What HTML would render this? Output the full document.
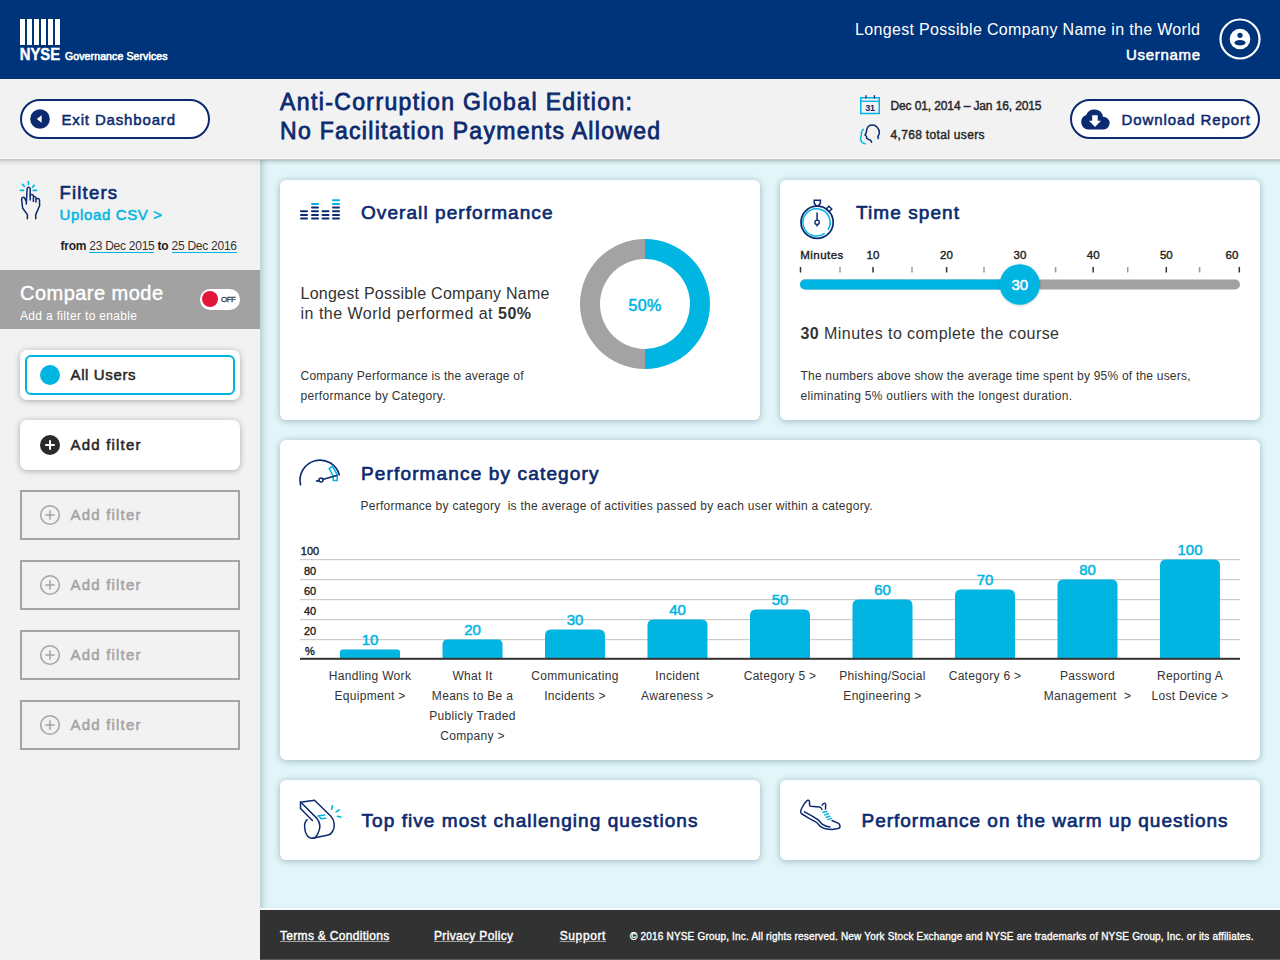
<!DOCTYPE html>
<html><head><meta charset="utf-8">
<style>
*{margin:0;padding:0;box-sizing:border-box}
html,body{width:1280px;height:960px;overflow:hidden;background:#f2f2f2;font-family:"Liberation Sans",sans-serif}
.a{position:absolute}
.t{position:absolute;white-space:nowrap;line-height:1}
.card{position:absolute;background:#fff;border-radius:6px;box-shadow:0 1px 7px rgba(0,50,70,.32)}
svg text{font-family:"Liberation Sans",sans-serif}
</style></head><body>
<div class="a" style="left:0;top:0;width:1280px;height:79px;background:#00347a"></div>
<div class="a" style="left:20px;top:19px;width:5px;height:26px;background:#fff"></div>
<div class="a" style="left:27px;top:19px;width:5px;height:26px;background:#fff"></div>
<div class="a" style="left:34px;top:19px;width:5px;height:26px;background:#fff"></div>
<div class="a" style="left:41px;top:19px;width:5px;height:26px;background:#fff"></div>
<div class="a" style="left:48px;top:19px;width:5px;height:26px;background:#fff"></div>
<div class="a" style="left:55px;top:19px;width:5px;height:26px;background:#fff"></div>
<svg class="a" style="left:0;top:40px" width="80" height="24"><text x="19.8" y="19.6" font-size="16.3" font-weight="bold" fill="#fff" stroke="#fff" stroke-width="0.45" textLength="40.3" lengthAdjust="spacingAndGlyphs">NYSE</text></svg>
<div class="t" style="top:51.11px;font-size:10.5px;color:#fff;-webkit-text-stroke:0.36px #fff;letter-spacing:0.118px;left:65px;-webkit-text-stroke:0.6px #fff;">Governance Services</div>
<div class="t" style="top:21.96px;font-size:16px;color:#fff;letter-spacing:0.331px;left:855px;">Longest Possible Company Name in the World</div>
<div class="t" style="top:47.30px;font-size:15px;color:#fff;-webkit-text-stroke:0.51px #fff;letter-spacing:0.687px;left:1126px;">Username</div>
<svg class="a" style="left:1218px;top:17px" width="44" height="44" viewBox="0 0 44 44">
<circle cx="22" cy="22" r="19.5" fill="none" stroke="#fff" stroke-width="2.2"/>
<circle cx="22" cy="22" r="10.3" fill="#fff"/>
<circle cx="22" cy="18.3" r="2.6" fill="#00347a"/>
<ellipse cx="22" cy="25.8" rx="5.6" ry="2.8" fill="#00347a"/>
</svg>
<div class="a" style="left:0;top:79px;width:1280px;height:80px;background:#f2f2f2"></div>
<div class="a" style="left:20px;top:99.4px;width:190px;height:40px;border:2px solid #0b2a6f;border-radius:20px;background:#fff"></div>
<svg class="a" style="left:30px;top:109px" width="20" height="20" viewBox="0 0 20 20">
<circle cx="10" cy="10" r="9.8" fill="#0b2a6f"/><path d="M6.8 10 L11.6 6.2 L11.6 13.8 Z" fill="#fff"/></svg>
<div class="t" style="top:112.30px;font-size:15px;color:#0b2a6f;-webkit-text-stroke:0.51px #0b2a6f;letter-spacing:0.842px;left:61.5px;">Exit Dashboard</div>
<div class="t" style="top:90.53px;font-size:23px;color:#0b2a6f;-webkit-text-stroke:0.78px #0b2a6f;letter-spacing:1.378px;left:280px;">Anti-Corruption Global Edition:</div>
<div class="t" style="top:120.03px;font-size:23px;color:#0b2a6f;-webkit-text-stroke:0.78px #0b2a6f;letter-spacing:1.289px;left:280px;">No Facilitation Payments Allowed</div>
<svg class="a" style="left:858px;top:93px" width="24" height="24" viewBox="0 0 24 24">
<rect x="2.75" y="4.75" width="18.5" height="15.75" fill="none" stroke="#00b5e2" stroke-width="1.5"/>
<line x1="2.75" y1="8.3" x2="21.25" y2="8.3" stroke="#00b5e2" stroke-width="1.3"/>
<line x1="8" y1="2.2" x2="8" y2="5.6" stroke="#0b2a6f" stroke-width="1.3"/>
<line x1="16.4" y1="2.2" x2="16.4" y2="5.6" stroke="#0b2a6f" stroke-width="1.3"/>
<text x="12" y="17.5" font-family="Liberation Sans" font-weight="bold" font-size="9" fill="#0b2a6f" text-anchor="middle" letter-spacing="-0.3">31</text>
</svg>
<div class="t" style="top:99.84px;font-size:12px;color:#262626;-webkit-text-stroke:0.41px #262626;letter-spacing:-0.120px;left:890.5px;">Dec 01, 2014 – Jan 16, 2015</div>
<svg class="a" style="left:858px;top:123px" width="24" height="24" viewBox="0 0 24 24">
<path d="M13.6 19.2 L12.6 17.3 L10.4 16.4 L8.7 15.1 L8.4 13.25 L7 12 L8.1 10.1 L8.6 7.3 C8.9 5.5 9.5 4.2 10.5 3.3 C11.5 2.4 13 2 14.5 2 C16.5 2 18 2.8 19.2 4.2 C20.6 5.8 21.7 7.9 21.4 10 C21.2 11.5 20.75 12 20.2 13 L19.8 13.6 L20.4 15.4" fill="none" stroke="#0b2a6f" stroke-width="1.5" stroke-linejoin="round" stroke-linecap="round"/>
<path d="M5.4 6.4 C4.5 7.2 3.8 8 3.6 8.9 C3.2 10 3.4 11.5 3.25 12.6 C3.1 13.8 2.6 14.6 2.6 15.75 C2.6 17 3.3 18.6 4.2 19.5 C5 20.2 6 20.5 7 20.75" fill="none" stroke="#00b5e2" stroke-width="1.5" stroke-linecap="round"/>
</svg>
<div class="t" style="top:129.34px;font-size:12px;color:#262626;-webkit-text-stroke:0.41px #262626;letter-spacing:0.330px;left:890.5px;">4,768 total users</div>
<div class="a" style="left:1070px;top:99.4px;width:190px;height:40px;border:2px solid #0b2a6f;border-radius:20px;background:#fff"></div>
<svg class="a" style="left:1078px;top:106px" width="36" height="26" viewBox="0 0 36 26">
<path d="M9.7 23.5 A7.5 7.5 0 0 1 8.2 9 A8.8 8.8 0 0 1 25 10.7 A6.4 6.4 0 0 1 25.5 23.5 Z" fill="#0b2a6f"/>
<path d="M14.2 9.3 H19.7 V14.8 H23 L17 21 L11 14.8 H14.2 Z" fill="#fff"/>
</svg>
<div class="t" style="top:112.30px;font-size:15px;color:#0b2a6f;-webkit-text-stroke:0.51px #0b2a6f;letter-spacing:0.900px;left:1121.5px;">Download Report</div>
<div class="a" style="left:0;top:158px;width:1280px;height:1px;background:#f8f8f8"></div>
<div class="a" style="left:0;top:160px;width:260px;height:800px;background:#f2f2f2"></div>
<svg class="a" style="left:12px;top:175px" width="32" height="48" viewBox="0 0 32 48">
<path d="M15.4 43.8 V39.6 L10.7 33.3 L9.6 24.5 C9.4 22.2 11.8 21.6 12.8 23.4 L14 26" fill="none" stroke="#0b2a6f" stroke-width="1.5" stroke-linecap="round" stroke-linejoin="round"/>
<path d="M14.3 29 L15.1 14 C15.2 11.6 18.1 11.6 18.2 14 L18.2 25" fill="none" stroke="#0b2a6f" stroke-width="1.5" stroke-linecap="round" stroke-linejoin="round"/>
<path d="M18.2 20.5 C18.6 18.9 21.3 19 21.4 21 V26.6 M21.4 22.3 C22 21.2 23.8 21.4 24 23 V27 M24.2 24.2 C25.2 22.9 27.3 23.5 27.5 25 L27.6 30.7 L23.7 39.6 V43.8" fill="none" stroke="#0b2a6f" stroke-width="1.5" stroke-linecap="round" stroke-linejoin="round"/>
<path d="M16.4 6.6 V9.5 M10.5 9.4 L12.4 11.4 M22.3 10.2 L20.6 12.1 M8.4 15.4 H11.6 M21.2 15.4 H24.6" fill="none" stroke="#00b5e2" stroke-width="1.6" stroke-linecap="round"/>
</svg>
<div class="t" style="top:184.34px;font-size:18.5px;color:#0b2a6f;-webkit-text-stroke:0.63px #0b2a6f;letter-spacing:1.190px;left:59.5px;">Filters</div>
<div class="t" style="top:206.80px;font-size:15px;color:#00b5e2;-webkit-text-stroke:0.51px #00b5e2;letter-spacing:0.639px;left:59.5px;">Upload CSV ></div>
<div class="t" style="left:60.5px;top:239.84px;font-size:12px;color:#333;letter-spacing:-0.253px"><b style="color:#222">from</b> 23 Dec 2015 <b style="color:#222">to</b> 25 Dec 2016</div>
<div class="a" style="left:89px;top:251.6px;width:64.6px;height:1.6px;background:#00b5e2"></div>
<div class="a" style="left:172.3px;top:251.6px;width:64.9px;height:1.6px;background:#00b5e2"></div>
<div class="a" style="left:0;top:269.5px;width:260px;height:59.5px;background:#a1a2a1"></div>
<div class="t" style="top:283.07px;font-size:20px;color:#fff;letter-spacing:0.469px;left:20px;-webkit-text-stroke:0.45px #fff;">Compare mode</div>
<div class="t" style="top:309.84px;font-size:12px;color:#fff;letter-spacing:0.330px;left:20px;">Add a filter to enable</div>
<div class="a" style="left:200px;top:289px;width:40.3px;height:20.5px;border-radius:10.25px;background:#fff"></div>
<div class="a" style="left:201.8px;top:290.8px;width:16.4px;height:16.4px;border-radius:50%;background:#e0173b"></div>
<div class="t" style="top:295.73px;font-size:8px;color:#333;-webkit-text-stroke:0.27px #333;letter-spacing:-0.498px;left:221px;">OFF</div>
<div class="a" style="left:20px;top:349.5px;width:220px;height:50.5px;border-radius:7px;background:#fff;box-shadow:0 1px 6px rgba(0,0,0,.3)"></div>
<div class="a" style="left:25px;top:355px;width:210px;height:40px;border-radius:6px;border:2px solid #00b5e2"></div>
<div class="a" style="left:40px;top:364.5px;width:20px;height:20px;border-radius:50%;background:#00b5e2"></div>
<div class="t" style="top:367.30px;font-size:15px;color:#262626;-webkit-text-stroke:0.51px #262626;letter-spacing:0.624px;left:70.5px;">All Users</div>
<div class="a" style="left:20px;top:419.5px;width:220px;height:50px;border-radius:7px;background:#fff;box-shadow:0 1px 6px rgba(0,0,0,.3)"></div>
<svg class="a" style="left:40px;top:434.5px" width="20" height="20" viewBox="0 0 20 20">
<circle cx="10" cy="10" r="10" fill="#2b2b2b"/><path d="M10 5.2 V14.8 M5.2 10 H14.8" stroke="#fff" stroke-width="2"/></svg>
<div class="t" style="top:437.30px;font-size:15px;color:#262626;-webkit-text-stroke:0.51px #262626;letter-spacing:1.201px;left:70.5px;">Add filter</div>
<div class="a" style="left:20px;top:490px;width:220px;height:50px;border:2px solid #a4a4a4"></div>
<svg class="a" style="left:39px;top:504px" width="22" height="22" viewBox="0 0 22 22">
<circle cx="11" cy="11" r="9.3" fill="none" stroke="#a4a4a4" stroke-width="1.5"/><path d="M11 6.3 V15.7 M6.3 11 H15.7" stroke="#a4a4a4" stroke-width="1.5"/></svg>
<div class="t" style="top:507.30px;font-size:15px;color:#a4a4a4;-webkit-text-stroke:0.51px #a4a4a4;letter-spacing:1.201px;left:70.5px;">Add filter</div>
<div class="a" style="left:20px;top:560px;width:220px;height:50px;border:2px solid #a4a4a4"></div>
<svg class="a" style="left:39px;top:574px" width="22" height="22" viewBox="0 0 22 22">
<circle cx="11" cy="11" r="9.3" fill="none" stroke="#a4a4a4" stroke-width="1.5"/><path d="M11 6.3 V15.7 M6.3 11 H15.7" stroke="#a4a4a4" stroke-width="1.5"/></svg>
<div class="t" style="top:577.30px;font-size:15px;color:#a4a4a4;-webkit-text-stroke:0.51px #a4a4a4;letter-spacing:1.201px;left:70.5px;">Add filter</div>
<div class="a" style="left:20px;top:630px;width:220px;height:50px;border:2px solid #a4a4a4"></div>
<svg class="a" style="left:39px;top:644px" width="22" height="22" viewBox="0 0 22 22">
<circle cx="11" cy="11" r="9.3" fill="none" stroke="#a4a4a4" stroke-width="1.5"/><path d="M11 6.3 V15.7 M6.3 11 H15.7" stroke="#a4a4a4" stroke-width="1.5"/></svg>
<div class="t" style="top:647.30px;font-size:15px;color:#a4a4a4;-webkit-text-stroke:0.51px #a4a4a4;letter-spacing:1.201px;left:70.5px;">Add filter</div>
<div class="a" style="left:20px;top:700px;width:220px;height:50px;border:2px solid #a4a4a4"></div>
<svg class="a" style="left:39px;top:714px" width="22" height="22" viewBox="0 0 22 22">
<circle cx="11" cy="11" r="9.3" fill="none" stroke="#a4a4a4" stroke-width="1.5"/><path d="M11 6.3 V15.7 M6.3 11 H15.7" stroke="#a4a4a4" stroke-width="1.5"/></svg>
<div class="t" style="top:717.30px;font-size:15px;color:#a4a4a4;-webkit-text-stroke:0.51px #a4a4a4;letter-spacing:1.201px;left:70.5px;">Add filter</div>
<div class="a" style="left:260px;top:160px;width:1020px;height:750px;background:#e2f6f9;box-shadow:inset 5px 0 7px -3px rgba(0,40,50,.25)"></div>
<div class="a" style="left:0;top:159px;width:1280px;height:7px;background:linear-gradient(rgba(0,0,0,.2),rgba(0,0,0,.06) 50%,rgba(0,0,0,0))"></div>
<div class="card" style="left:280px;top:180px;width:480px;height:240px"></div>
<div class="card" style="left:780px;top:180px;width:480px;height:240px"></div>
<div class="card" style="left:280px;top:440px;width:980px;height:320px"></div>
<div class="card" style="left:280px;top:780px;width:480px;height:80px"></div>
<div class="card" style="left:780px;top:780px;width:480px;height:80px"></div>
<svg class="a" style="left:0;top:0" width="1280" height="240"><rect x="300" y="210.2" width="8" height="2" rx="1" fill="#0b2a6f"/><rect x="300" y="213.9" width="8" height="2" rx="1" fill="#0b2a6f"/><rect x="300" y="217.6" width="8" height="2" rx="1" fill="#0b2a6f"/><rect x="311" y="203.0" width="8" height="2" rx="1" fill="#00b5e2"/><rect x="311" y="206.6" width="8" height="2" rx="1" fill="#0b2a6f"/><rect x="311" y="210.2" width="8" height="2" rx="1" fill="#0b2a6f"/><rect x="311" y="213.9" width="8" height="2" rx="1" fill="#0b2a6f"/><rect x="311" y="217.6" width="8" height="2" rx="1" fill="#0b2a6f"/><rect x="321.5" y="210.2" width="8" height="2" rx="1" fill="#0b2a6f"/><rect x="321.5" y="213.9" width="8" height="2" rx="1" fill="#0b2a6f"/><rect x="321.5" y="217.6" width="8" height="2" rx="1" fill="#0b2a6f"/><rect x="332" y="199.3" width="8" height="2" rx="1" fill="#00b5e2"/><rect x="332" y="203.0" width="8" height="2" rx="1" fill="#00b5e2"/><rect x="332" y="206.6" width="8" height="2" rx="1" fill="#0b2a6f"/><rect x="332" y="210.2" width="8" height="2" rx="1" fill="#0b2a6f"/><rect x="332" y="213.9" width="8" height="2" rx="1" fill="#0b2a6f"/><rect x="332" y="217.6" width="8" height="2" rx="1" fill="#0b2a6f"/></svg>
<div class="t" style="top:203.42px;font-size:19px;color:#0b2a6f;-webkit-text-stroke:0.65px #0b2a6f;letter-spacing:1.076px;left:361px;">Overall performance</div>
<div class="t" style="top:286.46px;font-size:16px;color:#333;letter-spacing:0.253px;left:300.5px;">Longest Possible Company Name</div>
<div class="t" style="left:300.5px;top:306.46px;font-size:16px;color:#333;letter-spacing:0.493px">in the World performed at <b>50%</b></div>
<div class="t" style="top:369.84px;font-size:12px;color:#333;letter-spacing:0.210px;left:300.5px;">Company Performance is the average of</div>
<div class="t" style="top:389.84px;font-size:12px;color:#333;letter-spacing:0.311px;left:300.5px;">performance by Category.</div>
<svg class="a" style="left:575px;top:234px" width="140" height="140" viewBox="0 0 140 140">
<path d="M70 5 A65 65 0 0 1 70 135 V115 A45 45 0 0 0 70 25 Z" fill="#00b5e2"/>
<path d="M70 5 A65 65 0 0 0 70 135 V115 A45 45 0 0 1 70 25 Z" fill="#a3a3a3"/>
</svg>
<div class="t" style="top:298.46px;font-size:16px;color:#00b5e2;-webkit-text-stroke:0.54px #00b5e2;letter-spacing:0.300px;left:345px;width:600px;text-align:center;">50%</div>
<svg class="a" style="left:795px;top:195px" width="44" height="50" viewBox="0 0 44 50">
<circle cx="22.1" cy="27.3" r="16.1" fill="none" stroke="#0b2a6f" stroke-width="1.7"/>
<path d="M29.7 38.3 A13.6 13.6 0 1 1 32.9 34.9" fill="none" stroke="#00b5e2" stroke-width="1.5"/>
<path d="M19.2 5.2 H25.4 V8 L23.5 11 H21.1 L19.2 8 Z" fill="none" stroke="#0b2a6f" stroke-width="1.5"/>
<rect x="32" y="12" width="4" height="4" transform="rotate(45 34 14)" fill="none" stroke="#0b2a6f" stroke-width="1.4"/>
<line x1="22.1" y1="17.5" x2="22.1" y2="31.5" stroke="#0b2a6f" stroke-width="1.5"/>
<circle cx="22.1" cy="27.3" r="2.2" fill="#fff" stroke="#0b2a6f" stroke-width="1.4"/>
</svg>
<div class="t" style="top:203.42px;font-size:19px;color:#0b2a6f;-webkit-text-stroke:0.65px #0b2a6f;letter-spacing:1.081px;left:856px;">Time spent</div>
<div class="t" style="top:250.27px;font-size:11.5px;color:#222;-webkit-text-stroke:0.39px #222;letter-spacing:0.455px;left:800.3px;">Minutes</div>
<div class="t" style="top:250.27px;font-size:11.5px;color:#222;-webkit-text-stroke:0.39px #222;left:573px;width:600px;text-align:center;">10</div>
<div class="t" style="top:250.27px;font-size:11.5px;color:#222;-webkit-text-stroke:0.39px #222;left:646.5px;width:600px;text-align:center;">20</div>
<div class="t" style="top:250.27px;font-size:11.5px;color:#222;-webkit-text-stroke:0.39px #222;left:720px;width:600px;text-align:center;">30</div>
<div class="t" style="top:250.27px;font-size:11.5px;color:#222;-webkit-text-stroke:0.39px #222;left:793.2px;width:600px;text-align:center;">40</div>
<div class="t" style="top:250.27px;font-size:11.5px;color:#222;-webkit-text-stroke:0.39px #222;left:866.3px;width:600px;text-align:center;">50</div>
<div class="t" style="top:250.27px;font-size:11.5px;color:#222;-webkit-text-stroke:0.39px #222;left:932px;width:600px;text-align:center;">60</div>
<svg class="a" style="left:0;top:0" width="1280" height="320"><defs><filter id="ksh" x="-20%" y="-20%" width="140%" height="140%"><feDropShadow dx="0" dy="0.5" stdDeviation="0.8" flood-color="#000" flood-opacity="0.25"/></filter></defs><rect x="799.75" y="267" width="1.5" height="5.5" fill="#333"/><rect x="872.25" y="267" width="1.5" height="5.5" fill="#333"/><rect x="945.85" y="267" width="1.5" height="5.5" fill="#333"/><rect x="1019.25" y="267" width="1.5" height="5.5" fill="#333"/><rect x="1092.45" y="267" width="1.5" height="5.5" fill="#333"/><rect x="1165.55" y="267" width="1.5" height="5.5" fill="#333"/><rect x="1238.55" y="267" width="1.5" height="5.5" fill="#333"/><rect x="839.25" y="267" width="1.5" height="5.5" fill="#9a9a9a"/><rect x="911.25" y="267" width="1.5" height="5.5" fill="#9a9a9a"/><rect x="983.25" y="267" width="1.5" height="5.5" fill="#9a9a9a"/><rect x="1054.85" y="267" width="1.5" height="5.5" fill="#9a9a9a"/><rect x="1126.95" y="267" width="1.5" height="5.5" fill="#9a9a9a"/><rect x="1198.85" y="267" width="1.5" height="5.5" fill="#9a9a9a"/><rect x="800" y="279.5" width="440" height="10" rx="5" fill="#a1a2a1"/><rect x="800" y="279.5" width="225" height="10" rx="5" fill="#00b5e2"/><circle cx="1019.8" cy="284.5" r="20.2" fill="#00b5e2" filter="url(#ksh)"/></svg>
<div class="t" style="top:276.80px;font-size:15px;color:#fff;-webkit-text-stroke:0.51px #fff;left:719.8px;width:600px;text-align:center;">30</div>
<div class="t" style="left:800.5px;top:326.46px;font-size:16px;color:#333;letter-spacing:0.435px"><b>30</b> Minutes to complete the course</div>
<div class="t" style="top:370.34px;font-size:12px;color:#333;letter-spacing:0.212px;left:800.5px;">The numbers above show the average time spent by 95% of the users,</div>
<div class="t" style="top:389.84px;font-size:12px;color:#333;letter-spacing:0.300px;left:800.5px;">eliminating 5% outliers with the longest duration.</div>
<svg class="a" style="left:296px;top:455px" width="48" height="34" viewBox="0 0 48 34">
<path d="M4.56 29.7 A20 20 0 0 1 43.28 19.7" fill="none" stroke="#0b2a6f" stroke-width="1.6" stroke-linecap="round"/>
<path d="M33.2 13.6 L36.3 11.2 L41.2 19.5 L41.2 25.4 L37.3 25.4 L37.1 21 Z" fill="none" stroke="#00b5e2" stroke-width="1.5" stroke-linejoin="miter"/>
<line x1="21.4" y1="25.9" x2="40.6" y2="20.5" stroke="#0b2a6f" stroke-width="1.6" stroke-linecap="round"/>
<line x1="20" y1="26.3" x2="22" y2="25.8" stroke="#0b2a6f" stroke-width="1.6"/>
<circle cx="25" cy="25.1" r="2" fill="#fff" stroke="#0b2a6f" stroke-width="1.5"/>
</svg>
<div class="t" style="top:463.92px;font-size:19px;color:#0b2a6f;-webkit-text-stroke:0.65px #0b2a6f;letter-spacing:1.147px;left:361px;">Performance by category</div>
<div class="t" style="top:499.84px;font-size:12px;color:#333;letter-spacing:0.257px;left:360.5px;">Performance by category&nbsp; is the average of activities passed by each user within a category.</div>
<div class="t" style="top:545.69px;font-size:11px;color:#222;-webkit-text-stroke:0.37px #222;left:10px;width:600px;text-align:center;">100</div>
<div class="t" style="top:565.69px;font-size:11px;color:#222;-webkit-text-stroke:0.37px #222;left:10px;width:600px;text-align:center;">80</div>
<div class="t" style="top:585.69px;font-size:11px;color:#222;-webkit-text-stroke:0.37px #222;left:10px;width:600px;text-align:center;">60</div>
<div class="t" style="top:605.69px;font-size:11px;color:#222;-webkit-text-stroke:0.37px #222;left:10px;width:600px;text-align:center;">40</div>
<div class="t" style="top:625.69px;font-size:11px;color:#222;-webkit-text-stroke:0.37px #222;left:10px;width:600px;text-align:center;">20</div>
<div class="t" style="top:645.69px;font-size:11px;color:#222;-webkit-text-stroke:0.37px #222;left:10px;width:600px;text-align:center;">%</div>
<svg class="a" style="left:0;top:0" width="1280" height="760"><rect x="300" y="559.0" width="940" height="1.2" fill="#cdcdcd"/><rect x="300" y="579.0" width="940" height="1.2" fill="#cdcdcd"/><rect x="300" y="599.0" width="940" height="1.2" fill="#cdcdcd"/><rect x="300" y="619.0" width="940" height="1.2" fill="#cdcdcd"/><rect x="300" y="639.0" width="940" height="1.2" fill="#cdcdcd"/><path d="M340.0 659 V651.9 Q340.0 649.4 342.5 649.4 H397.5 Q400.0 649.4 400.0 651.9 V659 Z" fill="#00b5e2"/><path d="M442.5 659 V644.4 Q442.5 639.4 447.5 639.4 H497.5 Q502.5 639.4 502.5 644.4 V659 Z" fill="#00b5e2"/><path d="M545.0 659 V635.4 Q545.0 629.4 551.0 629.4 H599.0 Q605.0 629.4 605.0 635.4 V659 Z" fill="#00b5e2"/><path d="M647.5 659 V625.4 Q647.5 619.4 653.5 619.4 H701.5 Q707.5 619.4 707.5 625.4 V659 Z" fill="#00b5e2"/><path d="M750.0 659 V615.4 Q750.0 609.4 756.0 609.4 H804.0 Q810.0 609.4 810.0 615.4 V659 Z" fill="#00b5e2"/><path d="M852.5 659 V605.4 Q852.5 599.4 858.5 599.4 H906.5 Q912.5 599.4 912.5 605.4 V659 Z" fill="#00b5e2"/><path d="M955.0 659 V595.4 Q955.0 589.4 961.0 589.4 H1009.0 Q1015.0 589.4 1015.0 595.4 V659 Z" fill="#00b5e2"/><path d="M1057.5 659 V585.4 Q1057.5 579.4 1063.5 579.4 H1111.5 Q1117.5 579.4 1117.5 585.4 V659 Z" fill="#00b5e2"/><path d="M1160.0 659 V565.4 Q1160.0 559.4 1166.0 559.4 H1214.0 Q1220.0 559.4 1220.0 565.4 V659 Z" fill="#00b5e2"/><rect x="300" y="657.8" width="940" height="2" fill="#333"/></svg>
<div class="t" style="top:631.70px;font-size:15px;color:#00b5e2;-webkit-text-stroke:0.51px #00b5e2;left:70.0px;width:600px;text-align:center;">10</div>
<div class="t" style="top:621.70px;font-size:15px;color:#00b5e2;-webkit-text-stroke:0.51px #00b5e2;left:172.5px;width:600px;text-align:center;">20</div>
<div class="t" style="top:611.70px;font-size:15px;color:#00b5e2;-webkit-text-stroke:0.51px #00b5e2;left:275.0px;width:600px;text-align:center;">30</div>
<div class="t" style="top:601.70px;font-size:15px;color:#00b5e2;-webkit-text-stroke:0.51px #00b5e2;left:377.5px;width:600px;text-align:center;">40</div>
<div class="t" style="top:591.70px;font-size:15px;color:#00b5e2;-webkit-text-stroke:0.51px #00b5e2;left:480.0px;width:600px;text-align:center;">50</div>
<div class="t" style="top:581.70px;font-size:15px;color:#00b5e2;-webkit-text-stroke:0.51px #00b5e2;left:582.5px;width:600px;text-align:center;">60</div>
<div class="t" style="top:571.70px;font-size:15px;color:#00b5e2;-webkit-text-stroke:0.51px #00b5e2;left:685.0px;width:600px;text-align:center;">70</div>
<div class="t" style="top:561.70px;font-size:15px;color:#00b5e2;-webkit-text-stroke:0.51px #00b5e2;left:787.5px;width:600px;text-align:center;">80</div>
<div class="t" style="top:541.70px;font-size:15px;color:#00b5e2;-webkit-text-stroke:0.51px #00b5e2;left:890.0px;width:600px;text-align:center;">100</div>
<div class="t" style="top:669.84px;font-size:12px;color:#333;letter-spacing:0.300px;left:70.0px;width:600px;text-align:center;">Handling Work</div>
<div class="t" style="top:689.84px;font-size:12px;color:#333;letter-spacing:0.300px;left:70.0px;width:600px;text-align:center;">Equipment &gt;</div>
<div class="t" style="top:669.84px;font-size:12px;color:#333;letter-spacing:0.300px;left:172.5px;width:600px;text-align:center;">What It</div>
<div class="t" style="top:689.84px;font-size:12px;color:#333;letter-spacing:0.300px;left:172.5px;width:600px;text-align:center;">Means to Be a</div>
<div class="t" style="top:709.84px;font-size:12px;color:#333;letter-spacing:0.300px;left:172.5px;width:600px;text-align:center;">Publicly Traded</div>
<div class="t" style="top:729.84px;font-size:12px;color:#333;letter-spacing:0.300px;left:172.5px;width:600px;text-align:center;">Company &gt;</div>
<div class="t" style="top:669.84px;font-size:12px;color:#333;letter-spacing:0.300px;left:275.0px;width:600px;text-align:center;">Communicating</div>
<div class="t" style="top:689.84px;font-size:12px;color:#333;letter-spacing:0.300px;left:275.0px;width:600px;text-align:center;">Incidents &gt;</div>
<div class="t" style="top:669.84px;font-size:12px;color:#333;letter-spacing:0.300px;left:377.5px;width:600px;text-align:center;">Incident</div>
<div class="t" style="top:689.84px;font-size:12px;color:#333;letter-spacing:0.300px;left:377.5px;width:600px;text-align:center;">Awareness &gt;</div>
<div class="t" style="top:669.84px;font-size:12px;color:#333;letter-spacing:0.300px;left:480.0px;width:600px;text-align:center;">Category 5 &gt;</div>
<div class="t" style="top:669.84px;font-size:12px;color:#333;letter-spacing:0.300px;left:582.5px;width:600px;text-align:center;">Phishing/Social</div>
<div class="t" style="top:689.84px;font-size:12px;color:#333;letter-spacing:0.300px;left:582.5px;width:600px;text-align:center;">Engineering &gt;</div>
<div class="t" style="top:669.84px;font-size:12px;color:#333;letter-spacing:0.300px;left:685.0px;width:600px;text-align:center;">Category 6 &gt;</div>
<div class="t" style="top:669.84px;font-size:12px;color:#333;letter-spacing:0.300px;left:787.5px;width:600px;text-align:center;">Password</div>
<div class="t" style="top:689.84px;font-size:12px;color:#333;letter-spacing:0.300px;left:787.5px;width:600px;text-align:center;">Management&nbsp; &gt;</div>
<div class="t" style="top:669.84px;font-size:12px;color:#333;letter-spacing:0.300px;left:890.0px;width:600px;text-align:center;">Reporting A</div>
<div class="t" style="top:689.84px;font-size:12px;color:#333;letter-spacing:0.300px;left:890.0px;width:600px;text-align:center;">Lost Device &gt;</div>
<svg class="a" style="left:296px;top:797px" width="48" height="46" viewBox="0 0 48 46">
<path d="M4.5 5.3 L18.5 3.2 L34.9 19.3 C38.5 23 39.5 30 36.5 34.5 C35 37 33.5 38 32.3 38.1 L16.7 41.2" fill="none" stroke="#0b2a6f" stroke-width="1.5" stroke-linejoin="round" stroke-linecap="round"/>
<path d="M4.5 5.3 V11.5 L16.4 23.5" fill="none" stroke="#0b2a6f" stroke-width="1.5" stroke-linejoin="round" stroke-linecap="round"/>
<path d="M5.8 6.3 L20.9 21.4 C24 25 25 31 21.4 37.6 C20 40 18.5 41.2 16.7 41.2 C12 41.5 9 37 8.6 30 C8.4 26 9.5 24 11.2 22.7" fill="none" stroke="#0b2a6f" stroke-width="1.5" stroke-linejoin="round" stroke-linecap="round"/>
<path d="M21.9 19.1 L28.7 18 M23 19.3 L25 21.7 L29.7 21.2" fill="none" stroke="#00b5e2" stroke-width="1.5" stroke-linecap="round"/>
<path d="M36.5 8.7 L35.7 12.3 M43.3 12.8 L40.1 14.9 M41.4 19.3 L44.8 20.1" fill="none" stroke="#00b5e2" stroke-width="1.6" stroke-linecap="round"/>
</svg>
<div class="t" style="top:811.42px;font-size:19px;color:#0b2a6f;-webkit-text-stroke:0.65px #0b2a6f;letter-spacing:1.060px;left:361.5px;">Top five most challenging questions</div>
<svg class="a" style="left:796px;top:797px" width="48" height="44" viewBox="0 0 48 44">
<path d="M26 12.5 C25.2 11 24.5 10 23.8 10 L20.1 9.7 L15 9.25 C14 9 13.5 8.2 13.5 7.4 L13.5 4.6 C13.3 3.4 12.5 3 11.7 3.2 C10.5 3.6 9 5.5 7.9 7.4 C6.5 9.6 5 12 4.6 14.4 C4.4 15.6 4.8 16.2 5.6 16.75 L13.1 21.4 L20.1 25.2 C21.5 26 22.7 27.8 23.8 28.9 C25.5 30.5 27.5 31.3 29.5 31.75 C31.8 32.3 34 32.5 36.5 32.5 L42.1 31.5 C43.5 31 44.3 30 44 28.9 C43.8 27.6 43 26.6 42.1 26.1 L36 23.55" fill="none" stroke="#0b2a6f" stroke-width="1.5" stroke-linejoin="round" stroke-linecap="round"/>
<path d="M26.2 8.3 C26.8 7 27.5 6.2 28.1 6.2 C29 6.1 29.7 6.8 29.7 7.6 L29.5 12.1" fill="none" stroke="#0b2a6f" stroke-width="1.5" stroke-linecap="round"/>
<path d="M8.4 14.9 L15.4 18.6 L21.5 22.4 C23.5 23.8 24.5 25.8 26.2 27.1 C28.5 28.8 31 29.6 33.9 29.9" fill="none" stroke="#0b2a6f" stroke-width="1.5" stroke-linecap="round"/>
<path d="M27.1 15.3 L30.9 14.4 M28.8 17.9 L32.3 16.75 M30.4 20.3 L33.9 19.3 M31.8 22.6 L35.6 21.4" fill="none" stroke="#00b5e2" stroke-width="1.5" stroke-linecap="round"/>
</svg>
<div class="t" style="top:811.42px;font-size:19px;color:#0b2a6f;-webkit-text-stroke:0.65px #0b2a6f;letter-spacing:0.982px;left:861.5px;">Performance on the warm up questions</div>
<div class="a" style="left:260px;top:908px;width:1020px;height:2px;background:#f4fbfc"></div>
<div class="a" style="left:260px;top:910px;width:1020px;height:50px;background:#323232"></div>
<div class="a" style="left:260px;top:959px;width:1020px;height:1px;background:#5a5a5a"></div>
<div class="t" style="top:930.34px;font-size:12px;color:#fff;-webkit-text-stroke:0.41px #fff;letter-spacing:0.309px;left:280px;text-decoration:underline;text-decoration-color:#a0a0a0;">Terms &amp; Conditions</div>
<div class="t" style="top:930.34px;font-size:12px;color:#fff;-webkit-text-stroke:0.41px #fff;letter-spacing:0.332px;left:434px;text-decoration:underline;text-decoration-color:#a0a0a0;">Privacy Policy</div>
<div class="t" style="top:930.34px;font-size:12px;color:#fff;-webkit-text-stroke:0.41px #fff;letter-spacing:0.612px;left:559.7px;text-decoration:underline;text-decoration-color:#a0a0a0;">Support</div>
<div class="t" style="top:931.54px;font-size:10px;color:#fff;-webkit-text-stroke:0.34px #fff;letter-spacing:0.188px;left:630px;">© 2016 NYSE Group, Inc. All rights reserved. New York Stock Exchange and NYSE are trademarks of NYSE Group, Inc. or its affiliates.</div>
</body></html>
